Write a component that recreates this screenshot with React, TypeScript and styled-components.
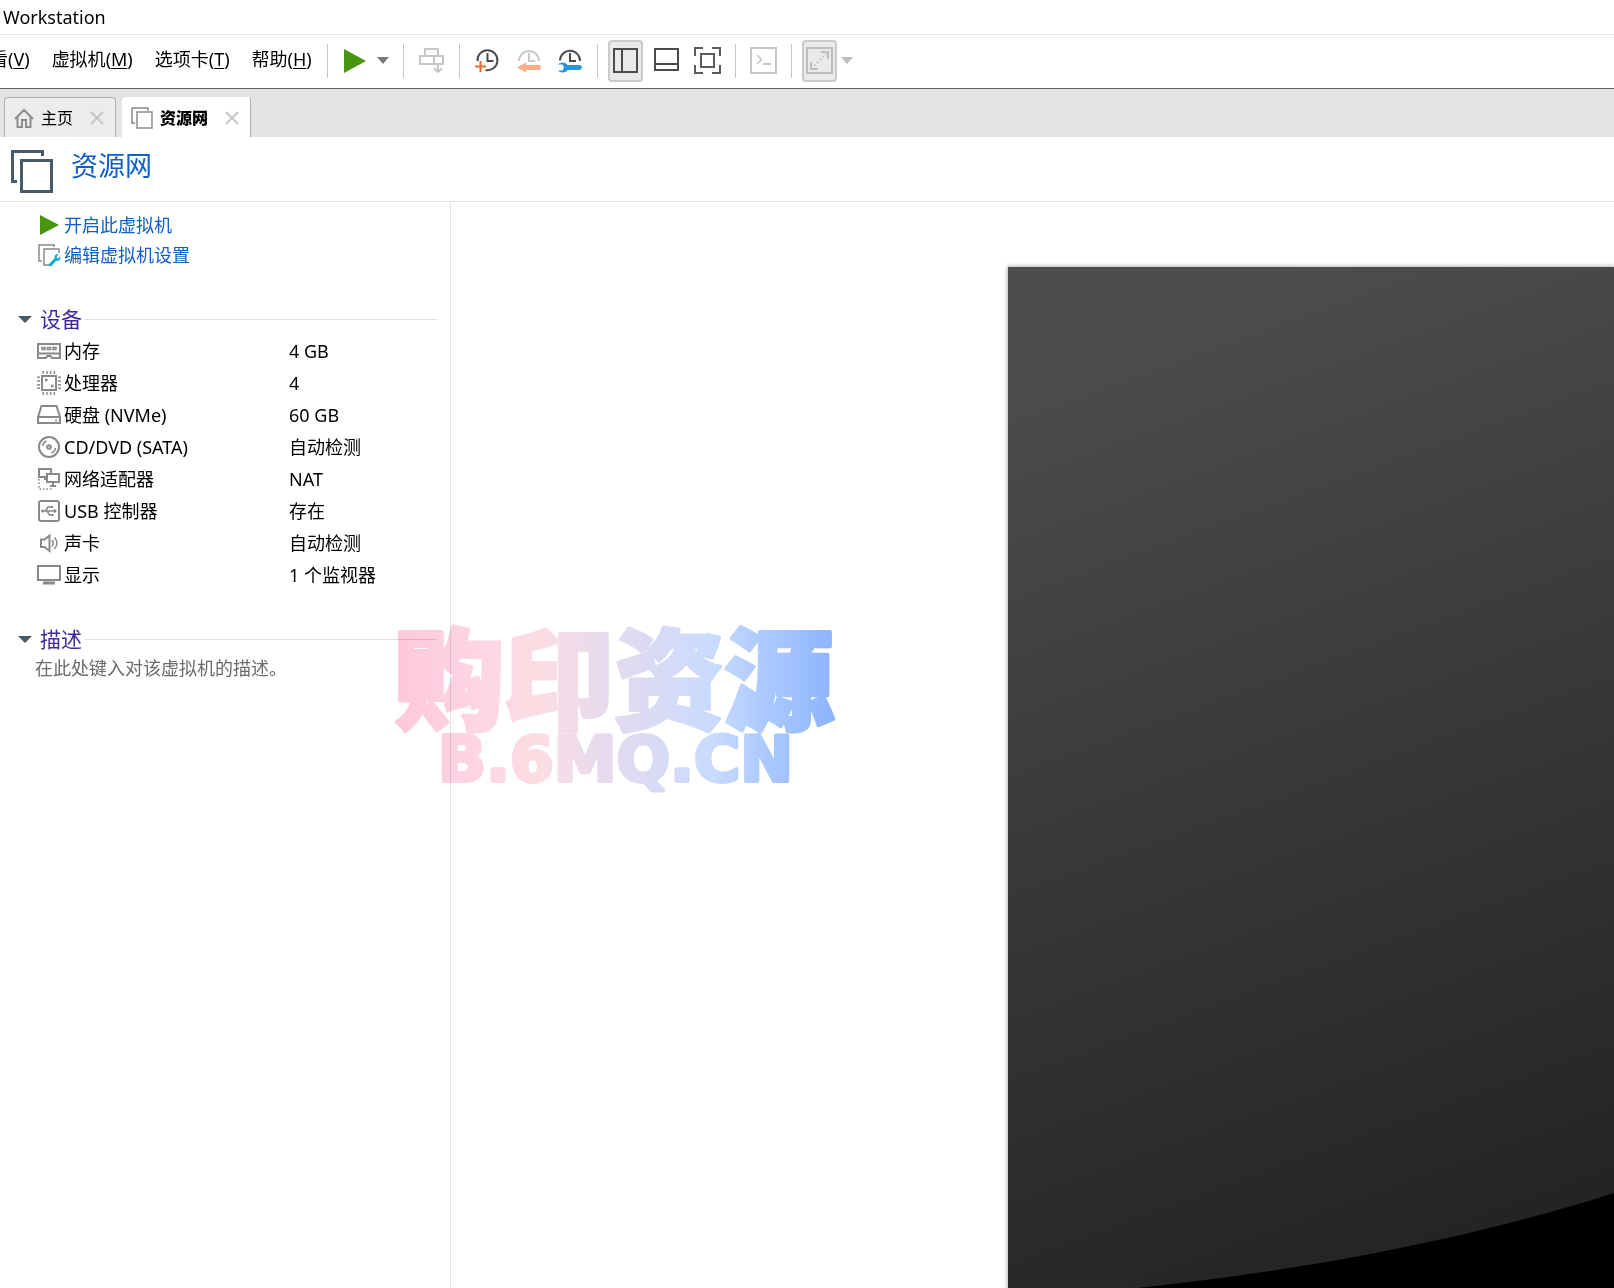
import React from "react";
import styled, { createGlobalStyle, css } from "styled-components";

const GlobalStyle = createGlobalStyle`
  *, *::before, *::after { box-sizing: border-box; }
  html, body, #root { margin: 0; height: 100%; }
  body {
    overflow: hidden;
    background: #fff;
    color: #000;
    font-family: "Noto Sans", "Noto Sans CJK SC", sans-serif;
    font-size: 18px;
    line-height: 24px;
  }
  svg { display: block; flex: none; }
`;

const Window = styled.div`
  position: relative;
  display: flex;
  flex-direction: column;
  min-height: 100vh;
  overflow: hidden;
`;

const TitleBar = styled.header`
  height: 35px;
  padding: 5px 3px;
  border-bottom: 1px solid #e3e3e3;
`;

const ToolBar = styled.div`
  display: flex;
  align-items: center;
  height: 54px;
  padding-bottom: 2px;
  border-bottom: 1px solid #5f6164;
`;

const Menu = styled.nav`
  display: flex;
  gap: 22px;
  margin-left: -10px;
  margin-right: 5px;
  padding-bottom: 3px;
`;

const plainButton = css`
  margin: 0;
  padding: 0;
  border: 0;
  background: none;
  color: inherit;
  font: inherit;
  cursor: pointer;
`;

const MenuButton = styled.button`
  ${plainButton}
  white-space: nowrap;
  u {
    text-decoration-thickness: 1px;
    text-underline-offset: 2px;
    text-decoration-skip-ink: none;
  }
`;

const Separator = styled.span`
  flex: none;
  width: 1px;
  height: 34px;
  margin: 0 10px;
  background: #c6c6c6;
`;

const ToolGroup = styled.div`
  display: flex;
  gap: 6px;
`;

const ToolButton = styled.button<{ $pressed?: boolean }>`
  ${plainButton}
  display: grid;
  place-items: center;
  width: 35px;
  height: 42px;
  border-radius: 4px;
  ${(p) => p.$pressed && css`
    background: #e9eaeb;
    box-shadow: inset 0 0 0 2px #c9cacb;
  `}
`;

const CaretButton = styled.button`
  ${plainButton}
  display: grid;
  place-items: center;
  width: 20px;
  height: 42px;
`;

const TabBar = styled.div`
  display: flex;
  align-items: flex-end;
  gap: 6px;
  height: 48px;
  padding-left: 4px;
  background: #e3e4e6;
`;

const Tab = styled.div<{ $active?: boolean }>`
  display: flex;
  align-items: center;
  height: 40px;
  padding: 0 11px 0 9px;
  border: 1px solid #adaeb0;
  border-bottom: 0;
  border-radius: 4px 4px 0 0;
  background: #ebecee;
  ${(p) => p.$active && css`
    padding-left: 8px;
    border-color: #fff #adaeb0 #fff #fff;
    background: #fff;
    font-weight: 700;
  `}
`;

const TabLabel = styled.button`
  ${plainButton}
  display: flex;
  align-items: center;
  gap: 7px;
  margin-right: 17px;
  font-size: 16px;
`;

const CloseButton = styled.button`
  ${plainButton}
`;

const PageHeader = styled.div`
  display: flex;
  align-items: center;
  gap: 17px;
  height: 65px;
  padding: 0 11px;
  border-bottom: 1px solid #e0e1e2;
`;

const PageTitle = styled.h1`
  margin: 0;
  padding-bottom: 6px;
  color: #0e5fc8;
  font-size: 27px;
  font-weight: 400;
  line-height: 32px;
`;

const Body = styled.div`
  display: flex;
  flex: 1;
`;

const SideBar = styled.aside`
  flex: none;
  width: 451px;
  padding: 8px 13px 0 18px;
  border-right: 1px solid #e0e1e2;
`;

const ActionLink = styled.a`
  display: flex;
  align-items: center;
  gap: 3px;
  height: 30px;
  padding-left: 19px;
  color: #0e5fc8;
  text-decoration: none;
`;

const Section = styled.section`
  margin-top: 34px;
`;

const SectionHead = styled.h2`
  display: flex;
  align-items: center;
  gap: 3px;
  height: 30px;
  margin: 0;
  font-weight: 400;
  &::after {
    content: "";
    flex: 1;
    height: 1px;
    background: #dedfe0;
  }
`;

const SectionToggle = styled.button`
  ${plainButton}
  display: flex;
  align-items: center;
  gap: 8px;
  color: #41299c;
  font-size: 21px;
`;

const DeviceTable = styled.table`
  width: 100%;
  margin: 1px 0 -1px;
  border-collapse: collapse;
`;

const DeviceName = styled.th`
  width: 271px;
  height: 32px;
  padding: 0 0 0 19px;
  font-weight: 400;
  text-align: left;
`;

const DeviceLabel = styled.span`
  display: flex;
  align-items: center;
  gap: 3px;
`;

const DeviceValue = styled.td`
  padding: 0;
`;

const Description = styled.p`
  margin: 0;
  padding: 2px 0 4px 17px;
  color: #6b6b6b;
`;

const Stage = styled.main`
  display: flex;
  flex: 1;
  padding: 65px 0 0 557px;
`;

const Screen = styled.div`
  display: flex;
  flex: 1;
  align-items: flex-end;
  background: linear-gradient(160deg, #4d4d4d 8%, #393939 48%, #222 96%);
  box-shadow: 0 0 4px 1px #b5b5b5;
`;

const ScreenGlare = styled.svg`
  width: 100%;
  height: 96px;
`;

const Watermark = styled.svg`
  position: absolute;
  top: 576px;
  left: 383px;
  mix-blend-mode: multiply;
  pointer-events: none;
`;

const Play = ({ w, h }: { w: number; h: number }) => (
  <svg width={w} height={h} viewBox="0 0 22 24" preserveAspectRatio="none">
    <path d="M0 0 22 12 0 24Z" fill="#48960f" />
  </svg>
);

const Caret = ({ w, color }: { w: number; color: string }) => (
  <svg width={w} height="7" viewBox="0 0 14 7" preserveAspectRatio="none">
    <path d="M0 0H14L7 7Z" fill={color} />
  </svg>
);

const Glyph = ({ size = 27, color = "#4a4b4d", sw = 2, children }: {
  size?: number; color?: string; sw?: number; children: React.ReactNode;
}) => (
  <svg width={size} height={size} viewBox={`0 0 ${size} ${size}`} fill="none" stroke={color} strokeWidth={sw}>
    {children}
  </svg>
);

const SendKeys = () => (
  <Glyph color="#c6c6c6">
    <path d="M7 9V2H20V9M2 9H25V17H2ZM16 9V17" />
    <path d="M20 17V25M16 21.500L20 25L24 21.500" />
  </Glyph>
);

const SnapshotTake = () => (
  <Glyph color="#4a4b4d">
    <path d="M3.500 14A10 10 0 1 1 11.500 23M13.500 6V14H19.500" />
    <path d="M6.500 14V25M1 19.500H12" stroke="#ee6a2c" />
  </Glyph>
);

const SnapshotRevert = () => (
  <Glyph color="#c9c9c9">
    <path d="M4 14A10 10 0 1 1 24 14M14 6V14H20" />
    <path d="M2 20.500 11 15.500V18H25.500V23H11V25.500Z" fill="#fdae87" stroke="none" />
  </Glyph>
);

const SnapshotManage = () => (
  <Glyph color="#4a4b4d">
    <path d="M4 13.500A10 10 0 1 1 24 14M14 6V14H20" />
    <path
      d="M2 17.500C4 15 9 14.500 11.500 18H23.500A2.500 2.500 0 0 1 23.500 23H11.500C9 26.500 4 26 2 23.500H6.500L8 20.500 6.500 17.500Z"
      fill="#2696d8"
      stroke="none"
    />
  </Glyph>
);

const SidePanel = () => (
  <Glyph>
    <path d="M2 2H25V25H2ZM10 2V25" />
  </Glyph>
);

const BottomPanel = () => (
  <Glyph>
    <path d="M2 2H25V23H2ZM2 17H25" />
  </Glyph>
);

const FullScreen = () => (
  <Glyph color="#5b5c5e">
    <path d="M1 9V1H9M18 1H26V9M26 18V26H18M9 26H1V18M7 7H20V20H7Z" />
  </Glyph>
);

const Console = () => (
  <Glyph color="#c6c6c6">
    <path d="M1 1H26V26H1ZM13 17H21" />
    <path d="M7 8 11.500 12.500 7 17" strokeWidth="1.500" />
  </Glyph>
);

const Stretch = () => (
  <Glyph color="#bcbdbe">
    <path d="M1 1H26V26H1ZM15 5H22V12M5 15V22H12" />
    <path d="M8 19 20 7" strokeWidth="1.500" strokeDasharray="2 2" />
  </Glyph>
);

const House = () => (
  <Glyph size={20} color="#8b8c8e">
    <path d="M1 11 10 2 19 11M3.500 9.500V19H8V12H12V19H16.500V9.500" />
  </Glyph>
);

const TabMachine = () => (
  <Glyph size={22} color="#8b8c8e" sw={1.5}>
    <path d="M1 17V1H17V4M1 16H4M6 5H21V21H6Z" />
  </Glyph>
);

const BigMachine = () => (
  <svg width="43" height="47" viewBox="0 -4 43 47" fill="none" stroke="#485a68" strokeWidth="3">
    <path d="M6 31.500H1.500V1.500H31.500V6M10.500 10.500H40.500V41.500H10.500Z" />
  </svg>
);

const Close = () => (
  <Glyph size={14} color="#c5c6c8">
    <path d="M1 1 13 13M13 1 1 13" />
  </Glyph>
);

const gray = "#88898b";

const EditSettings = () => (
  <Glyph size={24} color={gray} sw={1.5}>
    <path d="M5 18H2V2H17V4M12 22H7V6H22V10" />
    <path d="M12 21 17.500 15.500C17 13 19 10.500 21.500 11L19.500 14 21 15.500 23.500 13.500C24 16.500 21.500 18.500 19 18L14.500 23C12.500 24 11 22.500 12 21Z" fill="#00b1d3" stroke="none" />
  </Glyph>
);

const Memory = () => (
  <Glyph size={24} color={gray}>
    <path d="M1 5H23V19H15L13.500 17H10.500L9 19H1ZM1 14.500H23" />
    <path d="M5 8.500H8V10.500H5ZM10.500 8.500H13.500V10.500H10.500ZM16 8.500H19V10.500H16Z" strokeWidth="1.500" />
  </Glyph>
);

const Cpu = () => (
  <Glyph size={24} color={gray}>
    <path d="M5 5H19V19H5Z" />
    <path d="M5.500 1.500H19M5.500 22.500H19M1.500 5.500V19M22.500 5.500V19" strokeWidth="3" strokeDasharray="1.500 2.200" />
    <path d="M8 9H10.500M14 15H16.500" strokeWidth="2.500" />
  </Glyph>
);

const Disk = () => (
  <Glyph size={24} color={gray}>
    <path d="M1 14 4.500 3H19.500L23 14V20H1ZM1 14H23" />
    <path d="M18 17.500H20" strokeWidth="1.500" />
  </Glyph>
);

const Disc = () => (
  <Glyph size={24} color={gray}>
    <circle cx="12" cy="12" r="10" />
    <circle cx="12" cy="12" r="1.800" />
    <path d="M5.500 11A6.500 6.500 0 0 1 9.500 6M18.500 13A6.500 6.500 0 0 1 14.500 18" strokeWidth="1.500" />
  </Glyph>
);

const Network = () => (
  <Glyph size={24} color={gray}>
    <path d="M9 10H2V2H14V7M9 7H22V15H10V8M16 15V19M13 19H19M7 12H9" />
    <path d="M2 12V22H16" strokeDasharray="1.500 2" strokeWidth="1.500" />
  </Glyph>
);

const Usb = () => (
  <Glyph size={24} color={gray}>
    <rect x="2" y="2" width="20" height="20" rx="2" />
    <path d="M5 12H18M8.500 12 11 8H14M10 12 12.500 16H15" strokeWidth="1.500" />
    <path d="M17 9.500 20 12 17 14.500ZM4 12A1.500 1.500 0 1 0 7 12 1.500 1.500 0 1 0 4 12M13.500 7H16V9H13.500ZM14 15H16.500V17H14Z" fill={gray} stroke="none" />
  </Glyph>
);

const Sound = () => (
  <Glyph size={24} color={gray}>
    <path d="M4 8.500H7.500L12.500 4.500V20L7.500 16H4Z" />
    <path d="M15 9C16.500 11 16.500 13.500 15 15.500M17.500 6.500C20.500 10 20.500 14.500 17.500 18" strokeWidth="1.500" />
  </Glyph>
);

const Display = () => (
  <Glyph size={24} color={gray}>
    <path d="M1 3H23V17H1Z" />
    <path d="M6 20H18" strokeWidth="3" />
  </Glyph>
);

const menus = [
  ["看", "V"],
  ["虚拟机", "M"],
  ["选项卡", "T"],
  ["帮助", "H"],
];

const devices = [
  { icon: <Memory />, name: "内存", value: "4 GB" },
  { icon: <Cpu />, name: "处理器", value: "4" },
  { icon: <Disk />, name: "硬盘 (NVMe)", value: "60 GB" },
  { icon: <Disc />, name: "CD/DVD (SATA)", value: "自动检测" },
  { icon: <Network />, name: "网络适配器", value: "NAT" },
  { icon: <Usb />, name: "USB 控制器", value: "存在" },
  { icon: <Sound />, name: "声卡", value: "自动检测" },
  { icon: <Display />, name: "显示", value: "1 个监视器" },
];

export default function App() {
  return (
    <Window>
      <GlobalStyle />
      <TitleBar>Workstation</TitleBar>

      <ToolBar>
        <Menu>
          {menus.map(([label, key]) => (
            <MenuButton key={key}>
              {label}(<u>{key}</u>)
            </MenuButton>
          ))}
        </Menu>
        <Separator />
        <ToolButton aria-label="开机"><Play w={22} h={24} /></ToolButton>
        <CaretButton aria-label="电源选项"><Caret w={12} color="#77787a" /></CaretButton>
        <Separator />
        <ToolButton aria-label="发送按键"><SendKeys /></ToolButton>
        <Separator />
        <ToolGroup>
          <ToolButton aria-label="拍摄快照"><SnapshotTake /></ToolButton>
          <ToolButton aria-label="恢复快照"><SnapshotRevert /></ToolButton>
          <ToolButton aria-label="管理快照"><SnapshotManage /></ToolButton>
        </ToolGroup>
        <Separator />
        <ToolGroup>
          <ToolButton aria-label="显示库" aria-pressed="true" $pressed><SidePanel /></ToolButton>
          <ToolButton aria-label="缩略图栏"><BottomPanel /></ToolButton>
          <ToolButton aria-label="全屏"><FullScreen /></ToolButton>
        </ToolGroup>
        <Separator />
        <ToolButton aria-label="控制台"><Console /></ToolButton>
        <Separator />
        <ToolButton aria-label="拉伸" aria-pressed="true" $pressed><Stretch /></ToolButton>
        <CaretButton aria-label="拉伸选项"><Caret w={12} color="#bcbdbe" /></CaretButton>
      </ToolBar>

      <TabBar>
        <Tab>
          <TabLabel><House />主页</TabLabel>
          <CloseButton aria-label="关闭主页"><Close /></CloseButton>
        </Tab>
        <Tab $active>
          <TabLabel><TabMachine /><b>资源网</b></TabLabel>
          <CloseButton aria-label="关闭资源网"><Close /></CloseButton>
        </Tab>
      </TabBar>

      <PageHeader>
        <BigMachine />
        <PageTitle>资源网</PageTitle>
      </PageHeader>

      <Body>
        <SideBar>
          <ActionLink href="#power-on">
            <Glyph size={24}><path d="M3 2 22 12 3 22Z" fill="#48960f" stroke="none" /></Glyph>
            开启此虚拟机
          </ActionLink>
          <ActionLink href="#settings"><EditSettings />编辑虚拟机设置</ActionLink>

          <Section>
            <SectionHead>
              <SectionToggle aria-expanded="true"><Caret w={14} color="#485a68" />设备</SectionToggle>
            </SectionHead>
            <DeviceTable>
              <tbody>
                {devices.map((d) => (
                  <tr key={d.name}>
                    <DeviceName scope="row"><DeviceLabel>{d.icon}{d.name}</DeviceLabel></DeviceName>
                    <DeviceValue>{d.value}</DeviceValue>
                  </tr>
                ))}
              </tbody>
            </DeviceTable>
          </Section>

          <Section>
            <SectionHead>
              <SectionToggle aria-expanded="true"><Caret w={14} color="#485a68" />描述</SectionToggle>
            </SectionHead>
            <Description>在此处键入对该虚拟机的描述。</Description>
          </Section>
        </SideBar>

        <Stage>
          <Screen>
            <ScreenGlare viewBox="0 0 606 96" preserveAspectRatio="none">
              <path d="M110 98C290 80 460 48 606 1V98Z" fill="#000" />
            </ScreenGlare>
          </Screen>
        </Stage>
      </Body>

      <Watermark width="464" height="230" viewBox="0 -40 464 230">
        <defs>
          <linearGradient id="brand" gradientUnits="userSpaceOnUse" x1="10" y1="0" x2="453" y2="0">
            <stop offset="0" stopColor="#fec8da" />
            <stop offset=".2" stopColor="#fed6e1" />
            <stop offset=".34" stopColor="#fbdde4" />
            <stop offset=".45" stopColor="#eadbec" />
            <stop offset=".6" stopColor="#d8daf5" />
            <stop offset=".72" stopColor="#c9dbff" />
            <stop offset=".85" stopColor="#a9c8ff" />
            <stop offset="1" stopColor="#8cb3ff" />
          </linearGradient>
        </defs>
        <g fill="url(#brand)" stroke="url(#brand)" strokeLinejoin="round">
          <text x="11" y="105" fontFamily="'Noto Sans CJK SC', sans-serif" fontWeight="900" fontSize="110" strokeWidth="4">购印资源</text>
          <text x="55" y="165" fontFamily="'DejaVu Sans', sans-serif" fontWeight="700" fontSize="63" strokeWidth="4">B.6MQ.CN</text>
        </g>
      </Watermark>
    </Window>
  );
}
